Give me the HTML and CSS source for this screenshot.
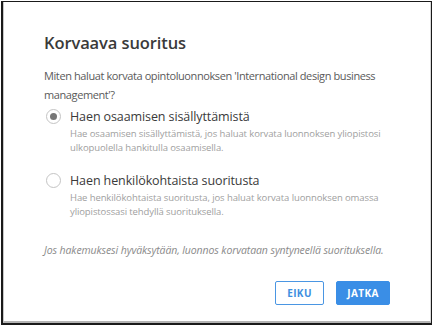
FILE: index.html
```html
<!DOCTYPE html>
<html lang="fi">
<head>
  <meta charset="UTF-8">
  <title>Korvaava suoritus</title>
  <link rel="stylesheet" href="styles.css">
</head>
<body>
  <div class="frame">
    <div class="dialog">
      <h1 class="dialog-title">Korvaava suoritus</h1>
      <p class="dialog-question">Miten haluat korvata opintoluonnoksen 'International design business management'?</p>

      <label class="option">
        <input type="radio" name="korvaus" class="option-input" checked>
        <span class="option-radio"></span>
        <span class="option-text">
          <span class="option-label">Haen osaamisen sisällyttämistä</span>
          <span class="option-desc">Hae osaamisen sisällyttämistä, jos haluat korvata luonnoksen yliopistosi ulkopuolella hankitulla osaamisella.</span>
        </span>
      </label>

      <label class="option">
        <input type="radio" name="korvaus" class="option-input">
        <span class="option-radio"></span>
        <span class="option-text">
          <span class="option-label">Haen henkilökohtaista suoritusta</span>
          <span class="option-desc">Hae henkilökohtaista suoritusta, jos haluat korvata luonnoksen omassa yliopistossasi tehdyllä suorituksella.</span>
        </span>
      </label>

      <p class="dialog-note">Jos hakemuksesi hyväksytään, luonnos korvataan syntyneellä suorituksella.</p>

      <div class="dialog-actions">
        <button class="btn btn-outline">Eiku</button>
        <button class="btn btn-primary">Jatka</button>
      </div>
    </div>
  </div>
</body>
</html>
```

FILE: styles.css
```css
html, body {
  margin: 0;
  padding: 0;
  background: #ffffff;
}

body {
  font-family: "Open Sans", "Noto Sans", sans-serif;
  color: #333333;
}

.frame {
  width: 431px;
  height: 324px;
  margin: 1px 0 0 1px;
  border: 1px solid #1a1a1a;
  border-width: 1px 1px 2px 2px;
  box-sizing: border-box;
  background: #ffffff;
}

.dialog {
  height: 100%;
  box-sizing: border-box;
  border-left: 1px solid #c8c8c8;
  border-bottom: 2px solid #b4b4b4;
  border-right: 1px solid #d8d8d8;
  padding: 30px 40px 0 40px;
  display: flex;
  flex-direction: column;
}

.dialog-title {
  margin: 0;
  font-size: 16.5px;
  line-height: 22px;
  font-weight: 600;
  color: #3a3a3a;
  letter-spacing: -0.1px;
}

.dialog-question {
  margin: 12px 0 0 0;
  font-size: 11px;
  line-height: 19px;
  color: #5a5a5a;
  letter-spacing: -0.4px;
}

.option {
  display: flex;
  align-items: flex-start;
  gap: 9px;
  margin-top: 4px;
  cursor: pointer;
}

.option + .option {
  margin-top: 17px;
}

.option-input {
  display: none;
}

.option-radio {
  flex: none;
  width: 15px;
  height: 15px;
  margin: 1px 0 0 2px;
  border: 1px solid #c4c4c4;
  border-radius: 50%;
  box-sizing: border-box;
  display: flex;
  align-items: center;
  justify-content: center;
}

.option-input:checked + .option-radio::after {
  content: "";
  width: 7px;
  height: 7px;
  border-radius: 50%;
  background: #777777;
}

.option-text {
  display: flex;
  flex-direction: column;
}

.option-label {
  font-size: 12.5px;
  line-height: 17px;
  font-weight: 500;
  color: #3a3a3a;
  letter-spacing: -0.1px;
}

.option-desc {
  margin-top: 2px;
  font-size: 9.5px;
  line-height: 14px;
  color: #a0a0a0;
  letter-spacing: -0.1px;
}

.dialog-note {
  margin: 23px 0 0 0;
  font-size: 10.5px;
  line-height: 16px;
  font-style: italic;
  color: #8a8a8a;
  letter-spacing: -0.1px;
}

.dialog-actions {
  display: flex;
  justify-content: flex-end;
  gap: 12px;
  margin-top: 23px;
}

.btn {
  height: 24px;
  padding: 0;
  font-family: inherit;
  font-size: 10px;
  font-weight: 700;
  text-transform: uppercase;
  letter-spacing: 0.4px;
  border-radius: 2px;
  cursor: pointer;
}

.btn-outline {
  width: 49px;
  background: #ffffff;
  color: #3d8ee0;
  border: 1px solid #4a96e3;
}

.btn-primary {
  width: 54px;
  background: #3a8ee6;
  color: #ffffff;
  border: 1px solid #3a8ee6;
}
```
